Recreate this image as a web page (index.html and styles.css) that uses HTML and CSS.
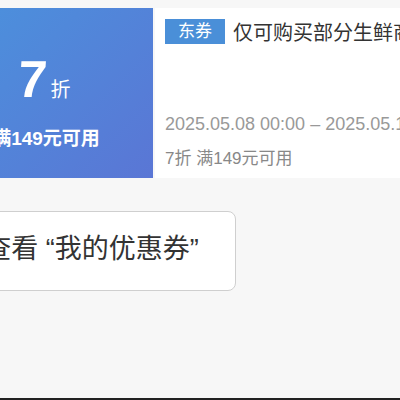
FILE: index.html
```html
<!DOCTYPE html>
<html lang="zh-CN">
<head>
  <meta charset="UTF-8">
  <title>优惠券</title>
  <link rel="stylesheet" href="styles.css">
</head>
<body>
  <div class="page">
    <div class="content">
      <div class="coupon">
        <div class="coupon-left">
          <div class="discount"><span class="num">7</span><span class="unit">折</span></div>
          <div class="cond">满149元可用</div>
        </div>
        <div class="coupon-right">
          <div class="title-row">
            <span class="tag">东券</span>
            <span class="title">仅可购买部分生鲜商品</span>
          </div>
          <div class="date">2025.05.08 00:00 – 2025.05.14 23:59</div>
          <div class="desc">7折 满149元可用</div>
        </div>
      </div>

      <button class="view-btn">查看 “我的优惠券”</button>
    </div>
    <div class="bottom-line"></div>
  </div>
</body>
</html>
```

FILE: styles.css
```css
* {
  box-sizing: border-box;
}
body {
  margin: 0;
  background: #f7f7f7;
  font-family: 'Liberation Sans', 'Noto Sans CJK SC', sans-serif;
  color: #333;
  overflow: hidden;
}
.page {
  min-height: 100vh;
  display: flex;
  flex-direction: column;
}
.content {
  flex: 1;
  padding-top: 8px;
  margin-left: -61px;
}
.coupon {
  display: flex;
  height: 170px;
  width: 520px;
  gap: 2px;
}
.coupon-left {
  width: 214px;
  flex-shrink: 0;
  background: linear-gradient(135deg, #4a93dd, #5a76d5);
  color: #fff;
  display: flex;
  flex-direction: column;
  align-items: center;
  padding-top: 45px;
}
.discount {
  display: flex;
  align-items: baseline;
  margin-left: -4px;
}
.num {
  font-size: 52px;
  font-weight: bold;
  line-height: 1;
  transform: skewX(-4deg);
}
.unit {
  font-size: 20px;
  margin-left: 4px;
}
.cond {
  margin-top: 18px;
  font-size: 19px;
  font-weight: bold;
}
.coupon-right {
  flex: 1;
  background: #fff;
  padding: 9px 10px 0 10px;
}
.title-row {
  display: flex;
  align-items: center;
  white-space: nowrap;
}
.tag {
  background: #4a8fd8;
  color: #fff;
  font-size: 17px;
  width: 60px;
  height: 25px;
  line-height: 25px;
  text-align: center;
  flex-shrink: 0;
}
.title {
  margin-left: 8px;
  font-size: 20px;
  color: #333;
}
.date {
  margin-top: 68px;
  font-size: 18px;
  color: #999;
  white-space: nowrap;
}
.desc {
  margin-top: 9px;
  font-size: 17px;
  color: #888;
  white-space: nowrap;
}
.view-btn {
  display: block;
  margin-top: 33px;
  width: 297px;
  height: 80px;
  background: #fff;
  border: 1px solid #cfcfcf;
  border-radius: 8px;
  font-family: 'Liberation Sans', 'Noto Sans CJK SC', sans-serif;
  font-size: 27px;
  color: #333;
  padding: 0 0 10px 8px;
}
.bottom-line {
  height: 2px;
  background: #222;
}
```
